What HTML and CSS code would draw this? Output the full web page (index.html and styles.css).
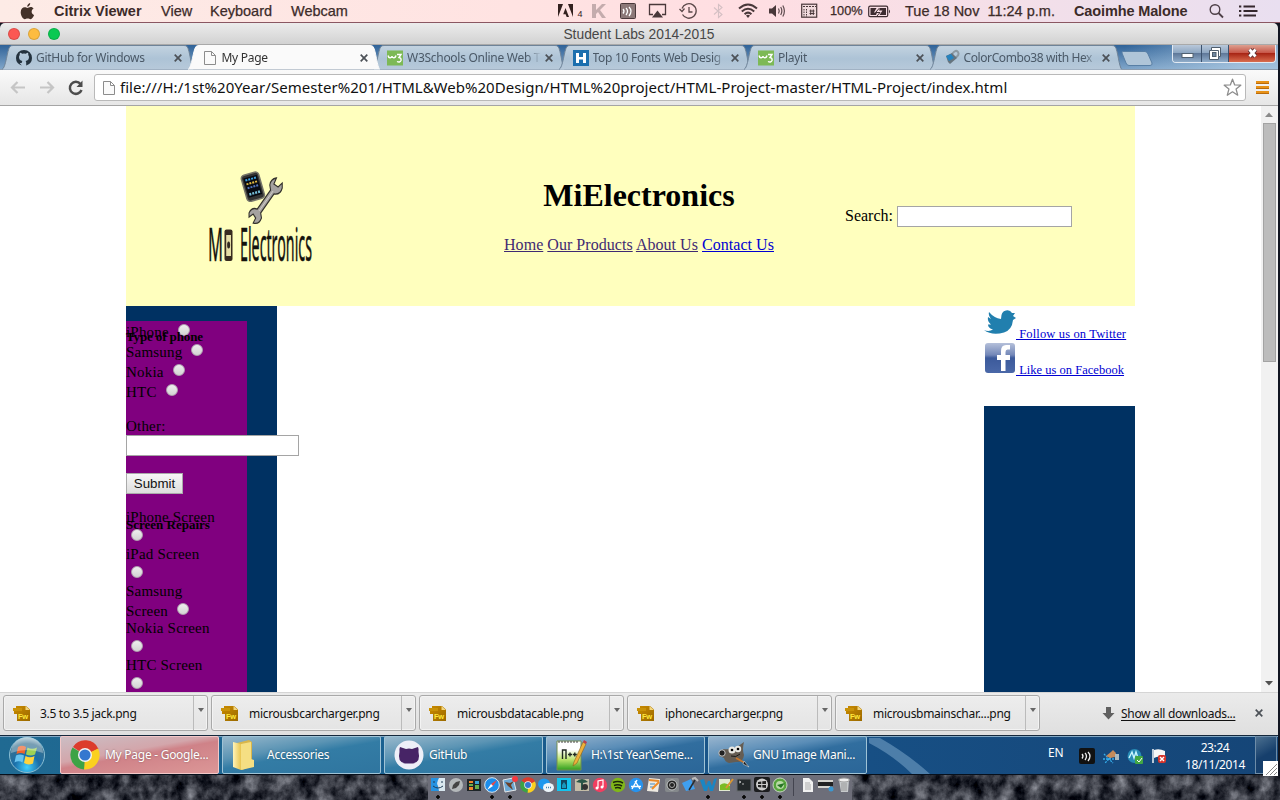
FILE: index.html
```html
<!DOCTYPE html>
<html lang="en">
<head>
<meta charset="utf-8">
<title>My Page</title>
<link rel="stylesheet" href="styles.css">
</head>
<body>
<svg class="defs" width="0" height="0" aria-hidden="true">
  <defs>
    <linearGradient id="tabfill" x1="0" y1="0" x2="0" y2="1"><stop offset="0" stop-color="#c3d3e0"/><stop offset=".55" stop-color="#adc3d6"/><stop offset="1" stop-color="#b7c9da"/></linearGradient>
    <linearGradient id="gold" x1="0" y1="0" x2="1" y2="1"><stop offset="0" stop-color="#c98a00"/><stop offset="1" stop-color="#9b6a00"/></linearGradient>
    <linearGradient id="fbg" x1="0" y1="0" x2="0" y2="1"><stop offset="0" stop-color="#b5c0da"/><stop offset=".4" stop-color="#7387b8"/><stop offset=".5" stop-color="#3c5a9b"/><stop offset="1" stop-color="#4a68a8"/></linearGradient>
    <linearGradient id="folder" x1="0" y1="0" x2="1" y2="0"><stop offset="0" stop-color="#fff3b8"/><stop offset="1" stop-color="#e9c550"/></linearGradient>
    <linearGradient id="npp" x1="0" y1="0" x2="0" y2="1"><stop offset=".3" stop-color="#fff"/><stop offset=".65" stop-color="#b9e36a"/><stop offset="1" stop-color="#2f9e1f"/></linearGradient>
    <radialGradient id="orb" cx=".5" cy=".85" r=".9"><stop offset="0" stop-color="#3fd0ff"/><stop offset=".4" stop-color="#1a6ea8"/><stop offset=".75" stop-color="#38708f"/><stop offset="1" stop-color="#c5dbe6"/></radialGradient>
    <filter id="rock" x="0" y="0" width="100%" height="100%" color-interpolation-filters="sRGB"><feTurbulence type="fractalNoise" baseFrequency=".07 .06" numOctaves="5" seed="8"/><feColorMatrix values=".85 0 0 0 -.21  .85 0 0 0 -.2  .85 0 0 0 -.165  0 0 0 0 1"/></filter>
  </defs>
  <symbol id="tabshape" viewBox="0 0 192 25"><path d="M0 24.500C4 23 5 5 8 1.500Q9 .500 11 .500H182Q184 .500 185 1.500C188 5 189 23 192 24.500"/></symbol>
  <symbol id="close" viewBox="0 0 10 10"><path d="M1.700 1.700 8.300 8.300M8.300 1.700 1.700 8.300" stroke="#4c5157" stroke-width="1.700" fill="none"/></symbol>
  <symbol id="page" viewBox="0 0 14 16"><path d="M1.500 1.500H8.500L12.500 5.500V14.500H1.500ZM8.500 1.500V5.500H12.500" fill="#fafafa" stroke="#8c8c8c"/></symbol>
  <symbol id="w3" viewBox="0 0 16 16"><rect width="16" height="15" y=".5" fill="#7db956"/><path d="M1 5.500Q1.500 8 3.200 7.800Q5 7.600 5 6Q5.300 8 7 7.800Q8.600 7.500 9 5.500M10 4.500H14L12 7.500Q14.500 7.800 14 10.500Q12.800 13 10 11.500" fill="none" stroke="#fff" stroke-width="1.400"/></symbol>
  <symbol id="fw" viewBox="0 0 18 17"><path d="M3 1H13L17 4.500V16H4V9H1V3H3Z" fill="url(#gold)"/><path d="M0 3H9V6H0Z" fill="#c99208"/><path d="M12.500 1V5H17Z" fill="#f3d67e"/><text x="5" y="14.300" font-family="Liberation Sans" font-size="7.500" font-weight="bold" fill="#ffe83c">Fw</text></symbol>
  <symbol id="chrome" viewBox="0 0 30 30"><path d="M15 15 3 7A14.500 14.500 0 0 1 28.500 9Z" fill="#dc3c2c"/><path d="M15 15 28 8.500A14.500 14.500 0 0 1 14 29.500Z" fill="#fbd01f"/><path d="M15 15 14 29.500A14.500 14.500 0 0 1 2.500 7.500Z" fill="#3ca345"/><circle cx="15" cy="15" r="7" fill="#f4f4f4"/><circle cx="15" cy="15" r="5.600" fill="#3577cf"/></symbol>
</svg>

<div class="desktop">
  <header class="menubar">
    <svg class="apple" width="15" height="17" viewBox="0 0 15 17"><path d="M10.200 0C10.300 2 8.800 3.700 7.200 3.800 7 2.200 8.500.300 10.200 0ZM7.300 4.900C8.200 4.900 9.200 4 10.700 4 12 4 13 4.700 13.600 5.500 10.700 7.200 11.300 11 14.100 12.100 13.300 14.200 12 16.200 10.600 16.200 9.500 16.200 9 15.500 7.700 15.500 6.300 15.500 5.800 16.200 4.800 16.200 3 16.200.700 12.500.700 9.200.700 6 2.700 4.200 4.700 4.200 5.900 4.200 6.700 4.900 7.300 4.900Z" fill="#433129"/></svg>
    <b class="m-app">Citrix Viewer</b><span class="m-view">View</span><span class="m-key">Keyboard</span><span class="m-cam">Webcam</span>
    <svg width="26" height="16" viewBox="0 0 26 16"><path d="M0 1H5L0 14ZM15 1H10L15 14ZM7.500 5 11 14H8.700L7.600 11.200H5.200Z" fill="#33211f"/><text x="19.500" y="14" font-size="9" font-family="Liberation Sans" fill="#33211f">4</text></svg>
    <svg width="16" height="16" viewBox="0 0 16 16"><path d="M1 1H5V7L11 1H15L9 7 15 15H11L7 9 5 11V15H1Z" fill="#c4acad"/></svg>
    <svg width="17" height="17" viewBox="0 0 17 17"><rect x=".5" y=".5" width="15" height="15" rx="1" fill="#8c7878" stroke="#49383a"/><path d="M3 6Q5 8 3 10.500M6 5Q9 8 6 12M9 4Q13 8 9 13" fill="none" stroke="#fff" stroke-width="1.300"/></svg>
    <svg width="19" height="16" viewBox="0 0 19 16"><path d="M5 11.500H1.500V1.500H17.500V11.500H14" fill="none" stroke="#49383a" stroke-width="1.300"/><path d="M9.500 7.500 15 14.500H4Z" fill="#49383a"/></svg>
    <svg width="20" height="17" viewBox="0 0 20 17"><path d="M3 5.500A7.300 7.300 0 1 1 3.500 11.500M.500 6 3 8.500 5.500 5.500M10 4V9H13.500" fill="none" stroke="#5b4849" stroke-width="1.300"/></svg>
    <svg width="14" height="16" viewBox="0 0 14 16"><path d="M3 4.500 11 11.500 7.500 14.500V1.500L11 4.500 3 11.500" fill="none" stroke="#d5c0c4" stroke-width="1.100"/></svg>
    <svg width="20" height="16" viewBox="0 0 20 16"><path d="M1 5.500Q10-2.500 19 5.500M3.800 8.500Q10 3 16.200 8.500M6.600 11.300Q10 8 13.400 11.300" fill="none" stroke="#49383a" stroke-width="2"/><path d="M8 12.500Q10 11 12 12.500L10 15Z" fill="#49383a"/></svg>
    <svg width="19" height="16" viewBox="0 0 19 16"><path d="M1 5.500H4L8 2V14L4 10.500H1Z" fill="#49383a"/><path d="M10.500 5.500Q12 8 10.500 10.500M12.700 4Q15 8 12.700 12M14.800 2.500Q18 8 14.800 13.500" fill="none" stroke="#5d4b4e" stroke-width="1.200"/></svg>
    <svg width="17" height="16" viewBox="0 0 17 16"><rect x=".7" y="1.200" width="15" height="13" fill="#f1dadd" stroke="#49383a" stroke-width="1.200"/><path d="M2 3.500H15" stroke="#49383a" stroke-dasharray="2 1"/><path d="M3 6V14M5.500 6V14" stroke="#49383a" stroke-dasharray="1.500 1"/><path d="M8.500 8H13.500M8.500 10.500H13.500M9.700 6.500V12M12.300 6.500V12" stroke="#49383a"/></svg>
    <span class="m-pct">100%</span>
    <svg width="23" height="15" viewBox="0 0 23 15"><rect x=".7" y="2.200" width="19" height="10.500" rx="1.500" fill="none" stroke="#3d2c31" stroke-width="1.200"/><path d="M2.500 4H8.500L6 8.500H9L8 11H2.500ZM12 4H18V11H11.500L14.500 6.500H11Z" fill="#3d2c31"/><path d="M11.500 4 7.500 8.500H12L9 12" fill="none" stroke="#3d2c31"/><path d="M21 5.500Q23 7.500 21 9.500" fill="#3d2c31"/></svg>
    <span class="m-date">Tue 18 Nov&nbsp; 11:24 p.m.</span><b class="m-user">Caoimhe Malone</b>
    <svg width="17" height="17" viewBox="0 0 17 17"><circle cx="7" cy="6.500" r="4.800" fill="none" stroke="#4e4048" stroke-width="1.400"/><path d="M10.500 10 15 14.500" stroke="#4e4048" stroke-width="1.800"/></svg>
    <svg width="19" height="14" viewBox="0 0 19 14"><path d="M4.500 2.500H16M4.500 7H18.500M4.500 11.500H17" stroke="#34272d" stroke-width="2"/><path d="M0 2.500H2.300M0 7H2.300M0 11.500H2.300" stroke="#34272d" stroke-width="2"/></svg>
  </header>

  <div class="window">
    <div class="titlebar"><div class="lights"><i class="red"></i><i class="yellow"></i><i class="green"></i></div><span class="title">Student Labs 2014-2015</span></div>

    <div class="tabstrip">
      <div class="tab"><svg class="shape"><use href="#tabshape"/></svg><svg class="fav" viewBox="0 0 16 16"><path d="M5.800 15.500V13Q3 13.500 2.500 11.500M5.800 15.500Q0 13.500 0 8A8 8 0 0 1 16 8Q16 13.500 10.200 15.500V12.500Q10.200 11.500 9.600 11 13 10.500 13 7Q13 5.800 12.200 5 12.500 4 12 2.800 11 2.800 9.800 3.700 8 3.200 6.200 3.700 5 2.800 4 2.800 3.500 4 3.800 5 3 5.800 3 7 3 10.500 6.400 11 5.800 11.500 5.800 12.500Z" fill="#24323e"/></svg><span>GitHub for Windows</span><svg class="x"><use href="#close"/></svg></div>
      <div class="tab active"><svg class="shape"><use href="#tabshape"/></svg><svg class="fav"><use href="#page"/></svg><span>My Page</span><svg class="x"><use href="#close"/></svg></div>
      <div class="tab"><svg class="shape"><use href="#tabshape"/></svg><svg class="fav"><use href="#w3"/></svg><span>W3Schools Online Web T</span><svg class="x"><use href="#close"/></svg></div>
      <div class="tab"><svg class="shape"><use href="#tabshape"/></svg><svg class="fav" viewBox="0 0 16 16"><rect width="16" height="16" fill="#1c6fae"/><path d="M3 3H6V7H10V3H13V13H10V9.500H6V13H3Z" fill="#fff"/></svg><span>Top 10 Fonts Web Desig</span><svg class="x"><use href="#close"/></svg></div>
      <div class="tab"><svg class="shape"><use href="#tabshape"/></svg><svg class="fav"><use href="#w3"/></svg><span>Playit</span><svg class="x"><use href="#close"/></svg></div>
      <div class="tab"><svg class="shape"><use href="#tabshape"/></svg><svg class="fav" viewBox="0 0 16 16"><path d="M8 4Q12-1 14 2T11 8" fill="none" stroke="#8c99a2" stroke-width="2"/><path d="M2 6 8 3 13 8 6 14 4 12Z" fill="#66747e"/><path d="M2 6 7 4 10 8 5 11Z" fill="#2583bf"/></svg><span class="combo">ColorCombo38 with Hex</span><svg class="x"><use href="#close"/></svg></div>
      <svg class="newtab" width="34" height="17" viewBox="0 0 34 17"><path d="M2.500 1.500H25Q27 1.500 28 4L32 13Q32.500 15.500 30 15.500H9Q7 15.500 6 13L2 3Q2 1.500 2.500 1.500Z" fill="#afc5d8" stroke="#587fa5"/></svg>
      <div class="winbtns"><i><svg width="28" height="18"><rect x="9" y="8.500" width="11" height="4" fill="#fff" stroke="#50606f"/></svg></i><i><svg width="26" height="18" viewBox="0 0 26 18"><path d="M9.500 2.500H18.500V11.500H16.500V14.500H7.500V5.500H9.500Z" fill="#fff" stroke="#4f5d6c"/><rect x="10.500" y="7.500" width="3.500" height="4" fill="#7088a0" stroke="#4f5d6c"/><path d="M9.500 5.500H16.500V11.500" fill="none" stroke="#4f5d6c"/></svg></i><i class="quit"><svg width="46" height="18"><path d="M20.500 4.500 26.500 11.500M26.500 4.500 20.500 11.500" stroke="#5d3436" stroke-width="4.600"/><path d="M20.500 4.500 26.500 11.500M26.500 4.500 20.500 11.500" stroke="#fff" stroke-width="2.800"/></svg></i></div>
    </div>

    <div class="toolbar">
      <svg width="18" height="18" viewBox="0 0 18 18"><path d="M16 8.500H3M8.500 3 3 8.500 8.500 14" fill="none" stroke="#c5c5c5" stroke-width="2.200"/></svg>
      <svg width="18" height="18" viewBox="0 0 18 18"><path d="M2 8.500H15M9.500 3 15 8.500 9.500 14" fill="none" stroke="#c5c5c5" stroke-width="2.200"/></svg>
      <svg width="18" height="18" viewBox="0 0 18 18"><path d="M13.500 5A6 6 0 1 0 14.500 11" fill="none" stroke="#4d4d4d" stroke-width="2.500"/><path d="M15.500 1.500V8H9.500Z" fill="#4d4d4d"/></svg>
      <div class="omnibox"><svg width="14" height="16"><use href="#page"/></svg><span class="url">file:///H:/1st%20Year/Semester%201/HTML&amp;Web%20Design/HTML%20project/HTML-Project-master/HTML-Project/index.html</span><svg class="star" width="19" height="19" viewBox="0 0 19 19"><path d="M9.500 1.200 11.700 6.900 17.800 7.200 13.100 11.100 14.700 17.200 9.500 13.800 4.300 17.200 5.900 11.100 1.200 7.200 7.300 6.900Z" fill="none" stroke="#8d8d8d" stroke-width="1.300" stroke-linejoin="round"/></svg></div>
      <div class="burger"><i></i><i></i><i></i></div>
    </div>

    <div class="view">
      <main class="site">
        <div class="masthead">
          <svg class="logo" width="110" height="100" viewBox="0 0 110 100">
            <g transform="translate(4 -.5) rotate(-16 47 28)"><rect x="37" y="3" width="18" height="27" rx="3.500" fill="#333" stroke="#77766b" stroke-width="1.500"/><rect x="39" y="6" width="14" height="20" fill="#080b12"/><path d="M40.500 8.500H52" stroke="#3ca2e0" stroke-width="2" stroke-dasharray="2 1"/><path d="M40.500 12.500H52" stroke="#e2ba41" stroke-width="2" stroke-dasharray="2 1"/><path d="M40.500 16.500H52" stroke="#5274ba" stroke-width="2" stroke-dasharray="2 1"/><path d="M40.500 23H52" stroke="#77bfd9" stroke-width="2.500" stroke-dasharray="2 1"/></g>
            <g transform="translate(9 2) scale(.83 1)"><path d="M74 6Q67 7 66 13L67 18 51 37Q44 35 41 41L41 45 46 42 49 46 46 51Q53 53 56 46L55 41 71 22Q79 23 81 16V11L76 15 71 12Z" fill="#a5a2a0" stroke="#34322c" stroke-width="1.300"/><path d="M53 39 70 19" stroke="#d3d0cb"/></g>
            <text x="2" y="91" class="logotext" textLength="15" lengthAdjust="spacingAndGlyphs">M</text><rect x="18.500" y="59.500" width="8" height="31.500" rx="2" fill="#382b20"/><rect x="20.200" y="65" width="4.800" height="21" fill="#e5dda6"/><ellipse cx="22.600" cy="75" rx="1.500" ry="3.500" fill="#302820"/><text x="34" y="91" class="logotext" textLength="72" lengthAdjust="spacingAndGlyphs">Electronics</text>
          </svg>
          <div class="brand"><h1>MiElectronics</h1><nav><a class="seen">Home</a> <a class="seen">Our Products</a> <a class="seen">About Us</a> <a>Contact Us</a></nav></div>
          <label class="search">Search: <input type="text"></label>
        </div>
        <div class="columns">
          <aside class="left">
            <form class="panel">
              <h4 class="over1">Type of phone</h4><h4 class="over2">Screen Repairs</h4>
              <div class="row">iPhone<i class="radio"></i></div>
              <div class="row">Samsung<i class="radio"></i></div>
              <div class="row">Nokia<i class="radio"></i></div>
              <div class="row">HTC<i class="radio"></i></div>
              <div class="other"><span>Other:</span><input type="text"></div>
              <button type="button">Submit</button>
              <div class="repair"><span>iPhone Screen</span><i class="radio"></i></div>
              <div class="repair"><span>iPad Screen</span><i class="radio"></i></div>
              <div class="samsung"><div>Samsung</div><div class="row">Screen<i class="radio"></i></div></div>
              <div class="repair"><span>Nokia Screen</span><i class="radio"></i></div>
              <div class="repair"><span>HTC Screen</span><i class="radio"></i></div>
            </form>
          </aside>
          <aside class="right">
            <div class="social">
              <a><svg class="bird" width="32" height="32" viewBox="0 0 32 32"><path d="M0 20Q5 22 9 19.500 4 18 4 14.500L7 14.500Q3 11 4 7L7 9Q4 5 5 2 10 8 17 9 17 1 22 .500 26-.500 28 3L31 3 29 6 32 8 29 10Q28 20 20 22.500 8 26 0 20Z" fill="#217fae"/></svg><span>&nbsp;Follow us on Twitter</span></a>
              <a class="like"><svg width="32" height="32" viewBox="0 0 32 32"><rect x="1" y="1" width="30" height="30" rx="3" fill="url(#fbg)"/><path d="M17 29V18H13V13H17V9Q17 3 22 3H26V7.500H23.500Q21.500 7.500 21.500 10V13H26V18H21.500V29Z" fill="#fff"/></svg><span>&nbsp;Like us on Facebook</span></a>
            </div>
            <div class="navy"></div>
          </aside>
        </div>
      </main>
      <div class="scroll"><svg width="16" height="17"><path d="M4 11 8 6.500 12 11Z" fill="#8a8a8a"/></svg><i></i><svg width="16" height="17"><path d="M4 6 8 10.500 12 6Z" fill="#505050"/></svg></div>
    </div>

    <div class="shelf">
      <div class="dl"><svg class="fw"><use href="#fw"/></svg><span>3.5 to 3.5 jack.png</span><b></b></div>
      <div class="dl"><svg class="fw"><use href="#fw"/></svg><span>microusbcarcharger.png</span><b></b></div>
      <div class="dl"><svg class="fw"><use href="#fw"/></svg><span>microusbdatacable.png</span><b></b></div>
      <div class="dl"><svg class="fw"><use href="#fw"/></svg><span>iphonecarcharger.png</span><b></b></div>
      <div class="dl"><svg class="fw"><use href="#fw"/></svg><span>microusbmainschar....png</span><b></b></div>
      <div class="all"><svg width="13" height="13"><path d="M4 0H9V6H12.500L6.500 12.500.500 6H4Z" fill="#606060"/></svg><u>Show all downloads...</u><svg class="x"><use href="#close"/></svg></div>
    </div>

    <div class="taskbar">
      <div class="start"><svg width="38" height="38" viewBox="0 0 38 38"><circle cx="19" cy="19" r="17.500" fill="url(#orb)" stroke="#8abed3"/><path d="M10 11Q14 8.500 18 11L16.500 18Q13 16 8.500 18Z" fill="#ed642c"/><path d="M19.500 11.500Q24 14 29 11.500L27 18.500Q23 20.500 18 18.500Z" fill="#9ed155"/><path d="M8 19.500Q12 17.500 16 19.500L14.500 26.500Q11 24 6.500 26.500Z" fill="#68c3ef"/><path d="M17.500 20Q22 22.500 26.500 20L25 27.500Q20 29.500 16 27Z" fill="#ffd33c"/><path d="M3 17A16 16 0 0 1 35 17Q19 11 3 17" fill="#fff" opacity=".32"/></svg></div>
      <div class="task hot"><svg width="30" height="30"><use href="#chrome"/></svg><span>My Page - Google...</span></div>
      <div class="task"><svg width="30" height="32" viewBox="0 0 30 32"><path d="M5 4 17 1 20 3V27L10 31Z" fill="#d9b64b"/><path d="M1 3 9 5V31L1 28Z" fill="url(#folder)"/><path d="M9 5 19 3V20L22 21V28L9 31Z" fill="#f5df83"/></svg><span>Accessories</span></div>
      <div class="task"><svg width="30" height="30" viewBox="0 0 30 30"><circle cx="15" cy="15" r="14.500" fill="#eeeff8"/><path d="M6 7 12 9Q15 8 18 9L24 7Q25 9 24.500 12 27 22 19 23.500H11Q3 22 5.500 12 5 9 6 7Z" fill="#472466"/></svg><span>GitHub</span></div>
      <div class="task"><svg width="30" height="32" viewBox="0 0 30 32"><path d="M1 2H25V31H1Z" fill="url(#npp)" stroke="#738d50"/><path d="M3 2V4M6 2V4M9 2V4M12 2V4M15 2V4M18 2V4M21 2V4" stroke="#444"/><path d="M6.500 20V11H10V20M12 15.500H16M14 13.500V17.500M16.800 15.500H20.800M18.800 13.500V17.500" fill="none" stroke="#202820" stroke-width="1.400"/><path d="M18 23 27 3 30 5 21 24 17 27Z" fill="#eeb13b" stroke="#895f1c" stroke-width=".6"/><path d="M27 3 28 1 31 3 30 5Z" fill="#be3f4c"/></svg><span>H:\1st Year\Seme...</span></div>
      <div class="task"><svg width="32" height="28" viewBox="0 0 32 28"><path d="M5 8Q13 9 19 6L26 1Q24 8 26 14 25 22 18 21L11 22Q7 21 6 17L1 15Q1 11 5 10Z" fill="#655d53"/><circle cx="14" cy="9" r="3.500" fill="#e8e8e3"/><circle cx="20" cy="8" r="3.200" fill="#e8e8e3"/><circle cx="14" cy="9" r="1.300"/><circle cx="20" cy="8" r="1.300"/><circle cx="4" cy="12" r="3.200" fill="#222" stroke="#c7c7c7"/><path d="M13 15Q18 17 22 13" stroke="#1c1b19" fill="none"/><path d="M18 17 27 22" stroke="#c7762b" stroke-width="2"/><path d="M26 20 31 26 25 23Z" fill="#171717" stroke="#ddd" stroke-width=".6"/></svg><span>GNU Image Mani...</span></div>
      <svg class="gleam" width="70" height="38" viewBox="0 0 70 38"><path d="M-1 2H10Q38 18 60 38H42Q24 20-1 7Z" fill="#84add0" opacity=".5"/></svg>
      <span class="lang">EN</span>
      <div class="tray">
        <svg width="16" height="16"><rect width="16" height="16" rx="2" fill="#111"/><path d="M3 6Q5 8 3 10.500M6 5Q9 8 6 12M9 4Q13 8 9 13" fill="none" stroke="#eee" stroke-width="1.300"/></svg>
        <svg width="16" height="16"><path d="M1 6 10 15M10 7 2 15M0 11H11" stroke="#36b0ee" stroke-width="1.300" stroke-dasharray="2 1"/><path d="M3 8 8 4 10 2 13 5 12 9 7 10Z" fill="#c58b5a"/><path d="M12 6H16V12H12Z" fill="#a9bac1"/></svg>
        <svg width="17" height="17"><circle cx="7.500" cy="8" r="7" fill="#278bb5"/><path d="M2 10 5 4 7 10 9 4 11 10" fill="none" stroke="#c9f7ff" stroke-width="1.400"/><rect x="8" y="8" width="8" height="8" rx="1" fill="#42a743"/><path d="M10 12 12 14 15 10" fill="none" stroke="#fff"/></svg>
        <svg width="16" height="16"><path d="M2 1V15" stroke="#fff" stroke-width="1.400"/><path d="M3 2Q8 0 14 3V10Q8 7 3 10Z" fill="#f7f7f7"/><rect x="7" y="7" width="8" height="8" rx="2" fill="#d6352c"/><path d="M9 9 13 13M13 9 9 13" stroke="#fff" stroke-width="1.400"/></svg>
      </div>
      <div class="clock"><span>23:24</span><span>18/11/2014</span></div>
      <i class="peek"></i>
    </div>
  </div>

  <footer class="ground">
    <svg class="rocks" width="1280" height="27"><rect width="1280" height="27" filter="url(#rock)"/></svg>
    <div class="dock">
      <svg class="run" viewBox="0 0 16 16"><path d="M1 1H15V14H1Z" fill="#d9e7ef"/><path d="M1 1H9Q6 6 8 9L9 14H1Z" fill="#2593e2"/><path d="M4 4V6M12 4V6M3 9Q8 13 13 9" stroke="#203d57" fill="none"/></svg>
      <svg viewBox="0 0 16 16"><circle cx="8" cy="8" r="7" fill="#b4b8ba"/><path d="M4 12 5 8 8 5 12 4 11 8 8 11Z" fill="#444"/></svg>
      <svg viewBox="0 0 16 16"><path d="M1 2H15V14H1Z" fill="#1d2427"/><path d="M3 4H7V6H3ZM3 10H7V13H3Z" fill="#ef852c"/><path d="M3 7H7V9H3ZM9 8H13V12H9Z" fill="#66ae4d"/><path d="M9 4H13V7H9Z" fill="#39a2d6"/></svg>
      <svg class="run" viewBox="0 0 16 16"><circle cx="8" cy="8" r="7.300" fill="#1b8dec" stroke="#dae8f0"/><path d="M13 3 9 9 7 7Z" fill="#ee4743"/><path d="M3 13 7 7 9 9Z" fill="#fff"/></svg>
      <svg class="run" viewBox="0 0 16 16"><path d="M1 3 11 1 14 13 3 15Z" fill="#6ca9d5" stroke="#e3e6e8"/><path d="M3 5 8 6 12 4 9 8 11 13 6 9Z" fill="#6b4028"/><circle cx="13" cy="2" r="3" fill="#f5393f"/></svg>
      <svg><use href="#chrome"/></svg>
      <svg viewBox="0 0 16 16"><ellipse cx="6" cy="7" rx="6" ry="5.500" fill="#1c97ee"/><ellipse cx="10.500" cy="10.500" rx="5.500" ry="4.500" fill="#edf5fa"/><path d="M8 10.500H13" stroke="#4884ac" stroke-width="1.500" stroke-dasharray="1 1"/></svg>
      <svg viewBox="0 0 16 16"><path d="M1 1H15V14H1Z" fill="#14c4ee"/><path d="M5 3H11V12H5Z" fill="#12475e"/><path d="M6 8 8 5 10 8V11H6Z" fill="#1999bb"/></svg>
      <svg viewBox="0 0 16 16"><path d="M1 2H15V14H1Z" fill="#c4bca7"/><path d="M2 5Q8-1 14 5L9 6 9 13 7 13 7 6Z" fill="#2b5648"/><circle cx="11" cy="10" r="3" fill="#333"/></svg>
      <svg viewBox="0 0 16 16"><circle cx="8" cy="8" r="7.200" fill="#f13e60"/><path d="M6 11V4L11 3V10" fill="none" stroke="#fff" stroke-width="1.200"/><circle cx="5" cy="11" r="1.500" fill="#fff"/><circle cx="10" cy="10" r="1.500" fill="#fff"/></svg>
      <svg viewBox="0 0 16 16"><circle cx="8" cy="8" r="7.200" fill="#80b719"/><path d="M3 5.500Q8 3.500 13 6M4 8.500Q8 7 12 9M5 11Q8 10 11 11.500" fill="none" stroke="#1b2709" stroke-width="1.500"/></svg>
      <svg viewBox="0 0 16 16"><circle cx="8" cy="8" r="7.200" fill="#2793ee"/><path d="M4 12 9 3M7 4 12 12M3 9.500H13" stroke="#fff" stroke-width="1.400"/></svg>
      <svg viewBox="0 0 16 16"><path d="M3 1 14 2 12 15 1 14Z" fill="#eeeae1"/><path d="M3 3 13 4" stroke="#e78928" stroke-width="2"/><path d="M4 7H9M4 10H8" stroke="#408bc3"/><path d="M6 12 13 5" stroke="#f08d27" stroke-width="2"/></svg>
      <svg viewBox="0 0 16 16"><rect x="1" y="1" width="14" height="14" rx="2" fill="#85898c"/><circle cx="8" cy="8" r="5" fill="#222" stroke="#c3c5c6"/><circle cx="8" cy="8" r="2.500" fill="none" stroke="#aaa"/></svg>
      <svg viewBox="0 0 16 16"><path d="M0 6 9 2 13 12 4 14Z" fill="#3f9ff0"/><path d="M7 13 13 3" stroke="#292d31" stroke-width="1.500"/><path d="M10 2 13 1 16 4" stroke="#bbb" fill="none" stroke-width="2"/></svg>
      <svg class="run" viewBox="0 0 16 16"><path d="M0 3 4 2 6 9 8 4H10L12 9 14 2 17 1 13 14H10L8.500 9 7 14H4Z" fill="#1a86c4"/></svg>
      <svg viewBox="0 0 16 16"><path d="M1 2H12V14H1Z" fill="#e1ead1"/><path d="M2 8Q7 4 12 9V13H2Z" fill="#7bbb22"/><path d="M8 11 15 2" stroke="#d99632" stroke-width="2"/></svg>
      <svg class="run" viewBox="0 0 16 16"><rect x="1" y="2" width="14" height="12" fill="#23282a" stroke="#65696d"/><path d="M3 4 5 5 3 6M6 7H8" stroke="#ddd" fill="none" stroke-width=".8"/></svg>
      <svg class="run" viewBox="0 0 16 16"><rect width="16" height="15" rx="2" fill="#1c1d1f"/><circle cx="8" cy="7.500" r="6" fill="#ccc"/><path d="M4 5 7.300 4.500V7H4ZM8.300 4.300 12 4V7H8.300ZM4 8H7.300V10.500L4 10ZM8.300 8H12V11L8.300 10.500Z" fill="#222"/></svg>
      <svg class="run" viewBox="0 0 16 16"><circle cx="8" cy="8" r="7" fill="#57a43c" stroke="#c6d4c2"/><circle cx="8" cy="8" r="4" fill="#b9d9a6"/><path d="M5 8 13 6 9 11Z" fill="#267324"/></svg>
      <i class="sep"></i>
      <svg viewBox="0 0 16 16"><path d="M3 1H9L13 5V15H3Z" fill="#f1f1f1"/><path d="M5 6H10M5 8H11M5 10H11M5 12H11" stroke="#ababab"/></svg>
      <svg viewBox="0 0 16 16"><path d="M0 3H15V5H0ZM0 9H12V11H0Z" fill="#d6d5cf"/><path d="M0 5H15V9H0Z" fill="#222"/><circle cx="13" cy="12" r="2.500" fill="#3c98d1"/></svg>
      <svg viewBox="0 0 16 16"><path d="M3 3 13 3 12 15H5Z" fill="#c7cacc"/><ellipse cx="8" cy="3" rx="5.500" ry="2" fill="#eee" stroke="#999"/><path d="M6 6V14M8 6V14M10 6V14" stroke="#999"/></svg>
    </div>
  </footer>
  <svg class="grip" width="15" height="15"><rect width="15" height="15" fill="#fff"/><path d="M3 14 14 3M7 14 14 7M11 14 14 11" stroke="#888"/></svg>
</div>
</body>
</html>
```
FILE: styles.css
```css
* { box-sizing: border-box; }
body { margin: 0; overflow: hidden; font-family: "Noto Sans", sans-serif; }
svg { display: block; flex: none; overflow: visible; }
.defs { position: absolute; }
.desktop { position: relative; width: 1280px; height: 800px; display: flex; flex-direction: column; background: #111521; overflow: hidden; }
span, b, u { white-space: nowrap; }

.menubar { height: 23px; flex: none; display: grid; grid-template-columns: 34px 107px 49px 81px 267px 33px 29px 28px 31px 32px 27px 30px 33px 29px 38px 37px 169px 134px 31px 1fr; padding-left: 20px; align-items: center; background: linear-gradient(90deg, #fdebe6, #ffe3e2 40%, #ffdee2 58%, #f3dfe9 80%, #e9dff0); border-bottom: 1px solid #8a5762; font: 14.5px/22px "Liberation Sans", Arial, sans-serif; color: #3c2b29; }
.menubar span { -webkit-text-stroke: .25px #3c2b29; }
.menubar .m-pct { font-size: 12.8px; }
.m-user { letter-spacing: -.13px; }

.window { width: 1278px; height: 752px; flex: none; display: flex; flex-direction: column; }
.titlebar { height: 22px; flex: none; display: grid; grid-template-columns: 1fr auto 1fr; align-items: center; background: linear-gradient(#ececec, #d2d2d2); border-bottom: 1px solid #a9a9a9; border-radius: 5px 5px 0 0; }
.lights { display: flex; gap: 8px; padding-left: 8px; }
.lights i { width: 12px; height: 12px; border-radius: 50%; border: 1px solid #0002; }
.red { background: #fc5753; } .yellow { background: #fdbc40; } .green { background: #0ac952; }
.title { font: 13.8px/21px "Liberation Sans", Arial, sans-serif; color: #474747; padding-top: 1px; }

.tabstrip { height: 25px; flex: none; display: flex; padding-left: 2px; background: linear-gradient(90deg, transparent 88%, #b4cfe6aa 97%), linear-gradient(#2f6298, #7fa5c9); font-size: 12px; letter-spacing: -.28px; color: #4b5967; border-bottom: 1px solid #8b9bad; }
.tab { position: relative; width: 185.5px; flex: none; display: grid; grid-template-columns: 20px 134px 1fr; padding: 1px 0 0 14px; align-items: center; }
.tab > * { position: relative; }
.tab .shape { position: absolute; left: 0; top: 0; width: 192px; height: 25px; fill: url(#tabfill); stroke: #6e8398; }
.tab.active { z-index: 2; color: #333; }
.tab.active .shape { fill: #fafafa; stroke: #fafafa; }
.fav { width: 16px; height: 16px; }
.tab span { line-height: 22px; mask-image: linear-gradient(90deg, #000 120px, transparent 134px); }
.tab .combo { letter-spacing: -.4px; }
.x { width: 10px; height: 10px; justify-self: end; }
.tab .x { justify-self: start; margin-left: 3px; }
.newtab { margin: 5px 0 0 5px; }
.winbtns { display: flex; height: 18px; margin-left: auto; margin-right: 2px; border: 1px solid #e3eaf3; border-top: 0; border-radius: 0 0 4px 4px; overflow: hidden; }
.winbtns i { background: linear-gradient(#b9c8da, #8ea7c2 45%, #60799a 50%, #90adca); border-right: 1px solid #3c526e; }
.winbtns .quit { background: linear-gradient(#dda090, #c8584a 45%, #a92616 50%, #d96d4f); border: 0; }

.toolbar { height: 36px; flex: none; display: grid; grid-template-columns: 29px 29px 27px 1152px 1fr; padding-left: 9px; align-items: center; background: linear-gradient(#fafafa, #e6e6e6); border-bottom: 1px solid #a5a5a5; }
.omnibox { height: 27px; display: grid; grid-template-columns: 18px 1fr 22px; padding-left: 7px; align-items: center; background: #fff; border: 1px solid #b9b9b9; border-radius: 3px; }
.url { font: 15px/24px "Noto Sans", sans-serif; letter-spacing: .04px; color: #111; margin-top: -2px; }
.burger { display: grid; gap: 2px; padding-left: 10px; }
.burger i { width: 13px; height: 3px; background: #e79117; border-bottom: 1px solid #b96b0c; }

.view { height: 586px; flex: none; display: flex; background: #fff; overflow: hidden; font: 16px/20px "Liberation Serif", "Times New Roman", serif; color: #000; }
.site { width: 1009px; margin-left: 126px; }
.masthead { height: 200px; display: grid; grid-template-columns: 264px 498px 1fr; background: #ffffbe; }
.logo { margin: 64px 0 0 80px; }
.logotext { font: 46px "Noto Sans", sans-serif; fill: #14130d; stroke: #14130d; stroke-width: .5px; }
.brand { text-align: center; padding-top: 71px; }
h1 { margin: 0; font-size: 32px; line-height: 36px; }
nav { margin-top: 22px; font-size: 16px; letter-spacing: .04px; }
a { color: #0000d2; text-decoration: underline; }
a.seen { color: #3f2a72; }
.search { display: flex; padding: 99px 0 0 0; margin-left: -43px; gap: 4px; line-height: 22px; }
input { height: 21px; padding: 0; border: 1px solid #a5a5a5; background: #fff; }
.search input { width: 175px; margin-top: 1px; }
.columns { display: flex; justify-content: space-between; height: 386px; }
.left { width: 151px; background: #003162; padding-top: 15px; }
.panel { position: relative; width: 121px; height: 371px; background: #80007f; padding-top: 1px; font-size: 15px; letter-spacing: .2px; }
.panel h4 { position: absolute; left: 0; margin: 0; font-size: 13px; line-height: 16px; letter-spacing: 0; white-space: nowrap; }
.panel .over1 { top: 8px; letter-spacing: -.12px; } .over2 { top: 196px; }
.row { display: flex; gap: 9px; height: 20px; }
.radio { flex: none; width: 12px; height: 12px; margin-top: 2px; border-radius: 50%; background: linear-gradient(#eee, #d3d3d3); border: 1px solid #b1a0b1; }
.other { display: flex; flex-direction: column; margin-top: 14px; }
.other span { height: 19px; }
.other input { width: 173px; height: 21px; }
button { display: block; width: 57px; height: 21px; margin: 17px 0 13px; padding: 0; border: 1px solid #aaa; background: linear-gradient(#f7f7f7, #ddd); font: 13.300px/18px "Liberation Sans", Arial, sans-serif; color: #111; }
.repair { height: 37px; white-space: nowrap; }
.repair span { display: block; height: 20px; }
.repair .radio { display: block; margin: 2px 0 0 5px; }
.samsung { height: 37px; }
.samsung > div { height: 20px; }
.right { width: 151px; display: flex; flex-direction: column; }
.social { height: 100px; font-size: 12.500px; letter-spacing: .14px; }
.social a { display: flex; height: 36px; align-items: flex-end; line-height: 16px; }
.social .like { letter-spacing: .02px; }
.social svg { align-self: flex-start; }
.social .bird { margin-top: 4px; }
.navy { flex: 1; background: #003162; }
.scroll { width: 17px; margin-left: auto; display: flex; flex-direction: column; background: #f1f1f1; }
.scroll i { height: 239px; margin: 0 2px; background: #bcbcbc; border: 1px solid #a3a3a3; }
.scroll svg:last-child { margin-top: auto; }

.shelf { height: 43px; flex: none; display: flex; gap: 3px; padding: 2px 0 0 3px; background: linear-gradient(#ebebeb, #dfdfdf); border-top: 1px solid #d5d5d5; font-size: 12px; letter-spacing: -.3px; color: #111; }
.dl { width: 205px; height: 36px; display: grid; grid-template-columns: 26px 1fr 14px; padding-left: 9px; align-items: center; background: linear-gradient(#ededed, #e4e4e4); border: 1px solid #a9a9a9; border-radius: 3px; box-shadow: inset 0 0 0 1px #f3f3f3; }
.dl span { padding-left: 1px; }
.dl + .dl span { padding-left: 2px; }
.fw { width: 18px; height: 17px; }
.dl b { align-self: stretch; border-left: 1px solid #bbb; padding: 12px 0 0 4px; }
.dl b::after { content: ""; display: block; border: 3px solid transparent; border-top: 4px solid #666; width: 0; }
.all { display: grid; grid-template-columns: 19px 133px 10px; align-items: center; height: 36px; margin-left: 59px; }
.all u { text-underline-offset: 2px; }

.taskbar { height: 40px; flex: none; display: flex; align-items: stretch; background: linear-gradient(90deg, #206a92, #1b6191 30%, #174f84 68%, #154577); border-top: 1px solid #15283c; border-bottom: 1px solid #07101c; box-shadow: inset 0 1px #82a8c4; color: #fff; font-size: 12px; letter-spacing: -.27px; }
.start { width: 60px; padding: 0 0 0 8px; }
.task { width: 159px; margin-right: 3px; display: grid; grid-template-columns: 35px 1fr; align-items: center; padding-left: 9px; border: 1px solid #9fc3d6; border-radius: 2px; background: linear-gradient(170deg, #98b8cc 0, #5b94b4 35%, #337ca5 50%, #2f759f); text-shadow: 0 0 2px #0006; }
.task:nth-of-type(n+5) { background: linear-gradient(170deg, #97b4ce 0, #5a8db7 35%, #316e9f 50%, #2b6698); }
.task.hot { background: linear-gradient(170deg, #cbbec4 0, #d3a6ab 40%, #cf8288 50%, #dc9797); border-color: #f2c8c8; }
.task span { padding-bottom: 1px; }
.gleam { margin-right: auto; }
.lang { width: 31px; line-height: 33px; }
.tray { display: grid; grid-template-columns: repeat(4, 24px); align-items: center; padding-top: 2px; }
.clock { width: 80px; display: flex; flex-direction: column; padding-top: 3px; line-height: 17px; text-align: center; letter-spacing: -.4px; }
.peek { width: 22px; border: 1px solid #6d8ca8; background: linear-gradient(150deg, #4c7090, #163f6c 50%); margin-right: 1px; }

.ground { position: relative; height: 25px; flex: none; display: flex; justify-content: center; overflow: hidden; }
.rocks { position: absolute; left: 0; top: 0; }
.dock { position: relative; width: 424px; height: 25px; display: flex; gap: 2px; padding: 2px 0 0 2px; background: #6d6e79; border-radius: 2px 2px 0 0; }
.dock svg { width: 16px; height: 16px; }
.dock .run { height: 22px; padding-bottom: 6px; background: radial-gradient(circle at 8px 20px, #090909 1.500px, transparent 2px); }
.sep { width: 1px; height: 18px; margin: 1px 4px 0 3px; background: #43444f; }
.grip { position: absolute; left: 1263px; top: 761px; }
```
